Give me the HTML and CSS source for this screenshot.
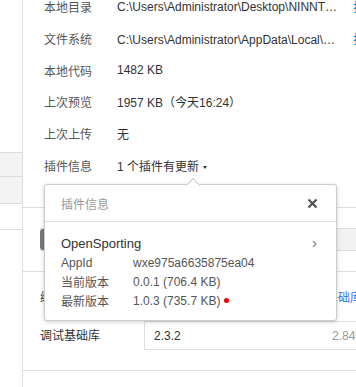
FILE: index.html
```html
<!DOCTYPE html>
<html lang="zh">
  <head>
    <meta charset="UTF-8" />
    <meta name="viewport" content="width=device-width, initial-scale=1.0" />
    <title>详情</title>
    <link rel="stylesheet" href="styles.css">
  </head>
  <body>
    <div class="page">
      <aside class="side">
        <div class="side-top"></div>
        <div class="side-item gray first"></div>
        <div class="side-item gray second"></div>
        <div class="side-item third"></div>
      </aside>

      <main class="main">
        <div class="info">
          <div class="row">
            <span class="label">本地目录</span>
            <span class="value ellip">C:\Users\Administrator\Desktop\NINNTENDO\OpenSporting</span>
            <a class="link">打开</a>
          </div>
          <div class="row">
            <span class="label">文件系统</span>
            <span class="value ellip">C:\Users\Administrator\AppData\Local\微信开发者工具</span>
            <a class="link">打开</a>
          </div>
          <div class="row">
            <span class="label">本地代码</span>
            <span class="value">1482 KB</span>
          </div>
          <div class="row">
            <span class="label">上次预览</span>
            <span class="value">1957 KB（今天16:24）</span>
          </div>
          <div class="row">
            <span class="label">上次上传</span>
            <span class="value">无</span>
          </div>
          <div class="row">
            <span class="label">插件信息</span>
            <span class="value">1 个插件有更新 <span class="caret"></span></span>
          </div>
        </div>

        <div class="gap"></div>
        <div class="tabs">
          <span class="tab active"></span>
          <span class="tab"></span>
        </div>
        <div class="gap"></div>

        <div class="setting">
          <span class="set-label">编译基础库</span>
          <a class="set-link">切换基础库</a>
        </div>

        <div class="setting lib">
          <span class="set-label">调试基础库</span>
          <div class="lib-box">
            <span class="lib-version">2.3.2</span>
            <span class="lib-usage">2.84%</span>
          </div>
        </div>
        <div class="lib-foot"></div>
      </main>

      <div class="popover">
        <div class="pop-head">
          <span>插件信息</span>
          <svg class="close" width="11" height="11" viewBox="0 0 11 11">
            <path d="M1.5 1.5 L9.5 9.5 M9.5 1.5 L1.5 9.5" stroke="#555" stroke-width="2.3" fill="none" />
          </svg>
        </div>
        <div class="pop-body">
          <div class="plugin-name">
            <span>OpenSporting</span>
            <svg width="5" height="8" viewBox="0 0 5 8">
              <path d="M1 1 L4 4 L1 7" stroke="#888" stroke-width="1.2" fill="none" />
            </svg>
          </div>
          <div class="prow"><span class="plabel">AppId</span><span>wxe975a6635875ea04</span></div>
          <div class="prow"><span class="plabel">当前版本</span><span>0.0.1 (706.4 KB)</span></div>
          <div class="prow"><span class="plabel">最新版本</span><span>1.0.3 (735.7 KB)</span><i class="dot"></i></div>
        </div>
      </div>
    </div>
  </body>
</html>
```

FILE: styles.css
```css
body {
  margin: 0;
  padding: 0;
  background: #ffffff;
  font-family: "Liberation Sans", "Noto Sans CJK SC", sans-serif;
  font-size: 12px;
  color: #333333;
  overflow: hidden;
}

.page {
  position: relative;
  display: flex;
  width: 356px;
  height: 387px;
  overflow: hidden;
}

.side {
  width: 22px;
  flex-shrink: 0;
}

.side-top {
  height: 152px;
  border-bottom: 1px solid #dddddd;
}

.side-item {
  border-bottom: 1px solid #dddddd;
}

.side-item.gray {
  background: #f3f3f3;
}

.side-item.first {
  height: 23px;
}

.side-item.second {
  height: 26px;
}

.side-item.third {
  height: 25px;
}

.main {
  flex: 1;
  min-width: 0;
  border-left: 1px solid #dddddd;
}

.info {
  margin-top: -9px;
  padding-left: 21px;
  padding-bottom: 26px;
  border-bottom: 1px solid #dddddd;
}

.row {
  display: flex;
  align-items: center;
  height: 31.7px;
  white-space: nowrap;
}

.label {
  width: 73px;
  flex-shrink: 0;
  color: #555555;
}

.value {
  color: #333333;
}

.ellip {
  width: 221px;
  overflow: hidden;
  text-overflow: ellipsis;
  flex-shrink: 0;
}

.link {
  margin-left: 15px;
  color: #3d6fe8;
  flex-shrink: 0;
}

.caret {
  display: inline-block;
  margin-left: 1px;
  vertical-align: middle;
  border-left: 2.5px solid transparent;
  border-right: 2.5px solid transparent;
  border-top: 3px solid #333333;
}

.gap {
  height: 20px;
}

.tabs {
  display: flex;
  height: 21px;
  margin-left: 17px;
  background: #f2f2f2;
  border-top: 1px solid #dddddd;
  border-bottom: 1px solid #dddddd;
}

.tab {
  width: 80px;
}

.tab.active {
  background: #787878;
  border-radius: 3px 0 0 3px;
}

.setting {
  display: flex;
  align-items: center;
  height: 49px;
  padding-left: 17px;
  border-top: 1px solid #dddddd;
  white-space: nowrap;
}

.set-label {
  width: 104px;
  flex-shrink: 0;
  font-size: 12px;
  color: #333333;
}

.set-link {
  margin-left: 158px;
  color: #3d6fe8;
}

.setting.lib {
  height: auto;
  border-top: none;
  align-items: flex-start;
}

.setting.lib .set-label {
  padding-top: 5px;
}

.lib-box {
  display: flex;
  flex-shrink: 0;
  width: 260px;
  height: 27px;
  align-items: center;
  padding-left: 9px;
  border: 1px solid #dddddd;
  border-right: none;
  font-size: 12px;
}

.lib-version {
  width: 178px;
  color: #333333;
}

.lib-usage {
  color: #999999;
}

.lib-foot {
  height: 20px;
  border-bottom: 1px solid #dddddd;
}

.popover {
  position: absolute;
  left: 44px;
  top: 184px;
  width: 291px;
  height: 135px;
  background: #ffffff;
  border: 1px solid #cccccc;
  border-radius: 3px;
  box-shadow: 0 1px 4px rgba(0, 0, 0, 0.18);
}

.popover::before {
  content: "";
  position: absolute;
  left: 143px;
  top: -5px;
  width: 9px;
  height: 9px;
  background: #ffffff;
  border-left: 1px solid #cccccc;
  border-top: 1px solid #cccccc;
  transform: rotate(45deg);
}

.pop-head {
  position: relative;
  display: flex;
  justify-content: space-between;
  align-items: center;
  height: 36px;
  padding: 0 18px 0 16px;
  border-bottom: 1px solid #dddddd;
  color: #999999;
}

.pop-body {
  padding: 12px 18px 0 16px;
}

.plugin-name {
  display: flex;
  justify-content: space-between;
  align-items: center;
  height: 19px;
  font-size: 13px;
  color: #333333;
  padding-right: 1px;
}

.prow {
  display: flex;
  align-items: center;
  height: 19px;
  color: #555555;
  white-space: nowrap;
}

.plabel {
  width: 72px;
  flex-shrink: 0;
}

.dot {
  width: 5px;
  height: 5px;
  margin-left: 4px;
  border-radius: 50%;
  background: #f00000;
}
```
